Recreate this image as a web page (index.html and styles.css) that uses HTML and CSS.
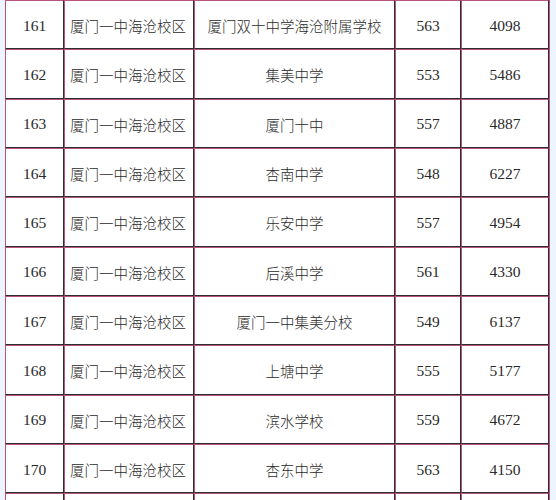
FILE: index.html
```html
<!DOCTYPE html>
<html lang="zh">
<head>
<meta charset="utf-8">
<title>成绩表</title>
<link rel="stylesheet" href="styles.css">
</head>
<body>
<div class="page">
<table class="scores">
<colgroup>
<col class="c-no"><col class="c-school"><col class="c-target"><col class="c-score"><col class="c-rank">
</colgroup>
<tbody>
<tr><td class="num">161</td><td class="left">厦门一中海沧校区</td><td>厦门双十中学海沧附属学校</td><td class="num">563</td><td class="num">4098</td></tr>
<tr><td class="num">162</td><td class="left">厦门一中海沧校区</td><td>集美中学</td><td class="num">553</td><td class="num">5486</td></tr>
<tr><td class="num">163</td><td class="left">厦门一中海沧校区</td><td>厦门十中</td><td class="num">557</td><td class="num">4887</td></tr>
<tr><td class="num">164</td><td class="left">厦门一中海沧校区</td><td>杏南中学</td><td class="num">548</td><td class="num">6227</td></tr>
<tr><td class="num">165</td><td class="left">厦门一中海沧校区</td><td>乐安中学</td><td class="num">557</td><td class="num">4954</td></tr>
<tr><td class="num">166</td><td class="left">厦门一中海沧校区</td><td>后溪中学</td><td class="num">561</td><td class="num">4330</td></tr>
<tr><td class="num">167</td><td class="left">厦门一中海沧校区</td><td>厦门一中集美分校</td><td class="num">549</td><td class="num">6137</td></tr>
<tr><td class="num">168</td><td class="left">厦门一中海沧校区</td><td>上塘中学</td><td class="num">555</td><td class="num">5177</td></tr>
<tr><td class="num">169</td><td class="left">厦门一中海沧校区</td><td>滨水学校</td><td class="num">559</td><td class="num">4672</td></tr>
<tr><td class="num">170</td><td class="left">厦门一中海沧校区</td><td>杏东中学</td><td class="num">563</td><td class="num">4150</td></tr>
<tr class="next"><td></td><td></td><td></td><td></td><td></td></tr>
</tbody>
</table>
</div>
</body>
</html>
```
FILE: styles.css
```css
html, body {
  margin: 0;
  padding: 0;
  background: #eef4fb;
  overflow: hidden;
}
.page {
  padding-left: 5px;
  height: 500px;
  overflow: hidden;
}
.scores {
  border-collapse: separate;
  border-spacing: 0;
  table-layout: fixed;
  width: 544px;
  background: #fff;
  border-right: 1px solid #b8557e;
  font-family: "Noto Sans CJK SC", "Liberation Serif", serif;
  font-size: 14.5px;
  font-weight: 300;
  color: #2a2a2a;
}
.c-no { width: 59px; }
.c-school { width: 130px; }
.c-target { width: 201px; }
.c-score { width: 66px; }
.c-rank { width: 88px; }
.scores td {
  box-sizing: border-box;
  height: 49.33px;
  padding: 2px 0 0;
  text-align: center;
  vertical-align: middle;
  white-space: nowrap;
  border-top: 1px solid #b8557e;
  border-left: 1px solid #b8557e;
  border-right: 1px solid #2e2e2e;
  border-bottom: 1px solid #2e2e2e;
}
.scores td.left {
  text-align: left;
  padding-left: 5px;
}
.scores td.num {
  font-family: "Liberation Serif", serif;
  font-size: 15.5px;
  font-weight: 400;
}
```
